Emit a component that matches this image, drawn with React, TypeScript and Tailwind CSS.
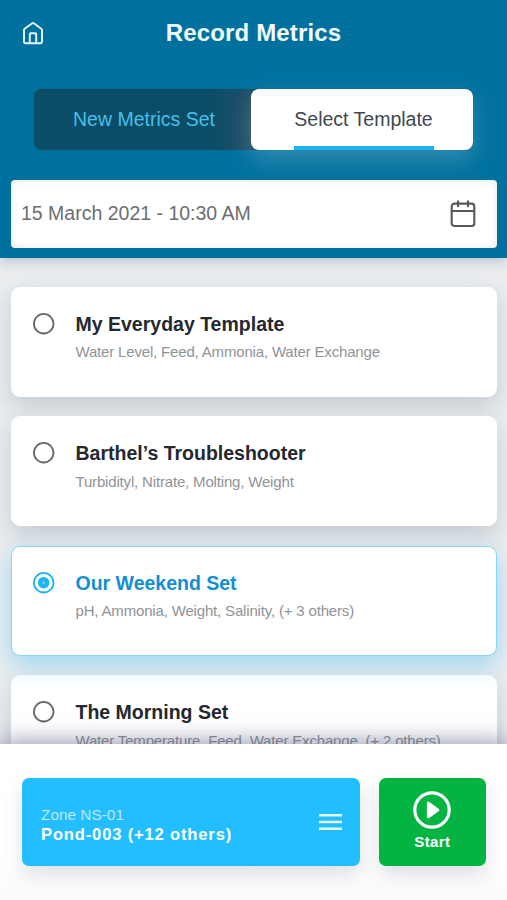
type Template = { name: string; metrics: string; selected?: boolean };

const templates: Template[] = [
  { name: "My Everyday Template", metrics: "Water Level, Feed, Ammonia, Water Exchange" },
  { name: "Barthel’s Troubleshooter", metrics: "Turbidityl, Nitrate, Molting, Weight" },
  { name: "Our Weekend Set", metrics: "pH, Ammonia, Weight, Salinity, (+ 3 others)", selected: true },
  { name: "The Morning Set", metrics: "Water Temperature, Feed, Water Exchange, (+ 2 others)" },
];

function HomeIcon() {
  return (
    <svg width="22" height="24" viewBox="0 0 22 24" fill="none" stroke="#e9f7ff" strokeWidth="1.9" strokeLinejoin="round" strokeLinecap="round">
      <path d="M2 9.1q0-.9.7-1.4L10.2 2.2q.8-.6 1.6 0L19.3 7.7q.7.5.7 1.4v11.4a1.8 1.8 0 0 1-1.8 1.8H3.8A1.8 1.8 0 0 1 2 20.5Z" />
      <path d="M7.8 22v-8.8a1 1 0 0 1 1-1h4.4a1 1 0 0 1 1 1V22" />
    </svg>
  );
}

function CalendarIcon() {
  return (
    <svg width="26" height="28" viewBox="0 0 26 28" fill="none" stroke="#55585c" strokeWidth="2.1" strokeLinecap="round">
      <rect x="1.7" y="3.6" width="22.6" height="22.4" rx="2.8" />
      <path d="M1.7 11h22.6M8 1.3v5M18 1.3v5" />
    </svg>
  );
}

function MenuIcon() {
  return (
    <svg width="23" height="18" viewBox="0 0 23 18" fill="none" stroke="#e9faff" strokeWidth="2.4">
      <path d="M0 2.2h23M0 9h23M0 15.800h23" />
    </svg>
  );
}

function Radio({ selected }: { selected?: boolean }) {
  return (
    <svg width="22" height="22" viewBox="0 0 22 22" fill="none">
      <circle cx="10.7" cy="10.7" r="9.8" stroke={selected ? "#20b4ee" : "#66696c"} strokeWidth="1.8" />
      {selected && <circle cx="10.7" cy="10.7" r="5.8" fill="#1fb4f2" />}
      {selected && <circle cx="10.7" cy="10.7" r="1.2" fill="#7ed8fa" />}
    </svg>
  );
}

function TemplateCard({ name, metrics, selected }: Template) {
  return (
    <div
      className={
        "flex h-[110px] shrink-0 gap-[21px] rounded-[9px] border bg-white pl-[21px] " +
        (selected
          ? "relative z-10 border-[#86d6f3] shadow-[0_9px_24px_rgba(60,190,245,0.46)]"
          : "border-white shadow-[0_9px_22px_rgba(70,95,115,0.24)]")
      }
    >
      <div className="pt-[25px]">
        <Radio selected={selected} />
      </div>
      <div className="whitespace-nowrap pt-6">
        <h2 className={"text-[19.5px] font-bold leading-6 " + (selected ? "text-[#118fd2]" : "text-[#24282f]")}>{name}</h2>
        <p className="pt-[7.5px] text-[15px] leading-[18px] tracking-[-0.17px] text-[#8f9497]">{metrics}</p>
      </div>
    </div>
  );
}

export default function App() {
  return (
    <div className="flex h-[900px] w-[507px] flex-col overflow-hidden bg-[#ebedef] font-['Liberation_Sans',Arial,sans-serif]">
      <header className="relative z-20 h-[257.5px] shrink-0 bg-[#00719f] px-[10.5px] shadow-[0_3px_12px_rgba(60,100,115,0.3)]">
        <div className="grid h-[66px] grid-cols-[1fr_auto_1fr] items-center px-[11px]">
          <HomeIcon />
          <h1 className="text-[24px] font-bold tracking-[0.15px] text-[#f2fbff]">Record Metrics</h1>
          <span />
        </div>
        <nav className="ml-[23.5px] mt-[23px] flex h-[61px] w-[439px] rounded-lg bg-[#0b4c67] text-[19.5px] shadow-[0_0_1px_#0b4c67]">
          <button className="h-full w-[217px] rounded-l-lg bg-linear-to-r from-transparent from-80% to-[#214f66] pl-[3px] text-[#46c0ea]">New Metrics Set</button>
          <button className="flex h-full w-[222px] flex-col items-center rounded-lg bg-white pl-[3px] text-[#42474f] shadow-[0_10px_24px_rgba(255,255,255,0.2)]">
            <span className="flex grow items-center whitespace-nowrap pt-[4px]">Select Template</span>
            <span className="h-1 w-[140px] bg-[#1db3ee]" />
          </button>
        </nav>
        <div className="mt-[29.5px] flex h-[68px] items-center justify-between rounded-[4px] bg-white pl-[10.5px] pr-[21px] shadow-[inset_0_0_7px_rgba(80,90,100,0.16)]">
          <span className="text-[19.5px] text-[#6b6e71]">15 March 2021 - 10:30 AM</span>
          <CalendarIcon />
        </div>
      </header>
      <main className="flex min-h-0 grow flex-col gap-[19.5px] overflow-hidden px-[10.5px] pt-[29px]">
        {templates.map((template) => (
          <TemplateCard key={template.name} {...template} />
        ))}
      </main>
      <footer className="relative z-20 flex h-[156.5px] shrink-0 gap-[19.5px] bg-linear-to-b from-white from-75% to-[#fafbfc] px-[21.5px] pt-[34.5px] shadow-[0_-2px_22px_rgba(55,65,105,0.55)]">
        <button className="flex h-[88px] w-[338.5px] items-center justify-between rounded-[7px] bg-[#22beff] pl-[19.5px] pr-[18px] text-left shadow-[0_9px_20px_rgba(70,90,110,0.18)]">
          <span className="flex flex-col whitespace-nowrap pt-[5px]">
            <span className="text-[15.4px] leading-5 text-[#b9ebff]">Zone NS-01</span>
            <span className="text-[16.6px] font-bold leading-5 tracking-[0.82px] text-white">Pond-003 (+12 others)</span>
          </span>
          <MenuIcon />
        </button>
        <button className="flex h-[88px] w-[106.5px] flex-col items-center rounded-[7px] bg-[#03b442] pt-[11.5px] text-white shadow-[0_9px_20px_rgba(70,90,110,0.18)]">
          <svg width="40" height="40" viewBox="0 0 40 40" fill="none">
            <circle cx="20" cy="20" r="17.2" stroke="white" strokeWidth="3.2" />
            <path d="M16.4 13.2v13.6L25.8 20Z" fill="white" stroke="white" strokeWidth="3" strokeLinejoin="round" />
          </svg>
          <span className="pt-[3.5px] text-[15px] font-bold leading-[18px] tracking-[0.35px]">Start</span>
        </button>
      </footer>
    </div>
  );
}
